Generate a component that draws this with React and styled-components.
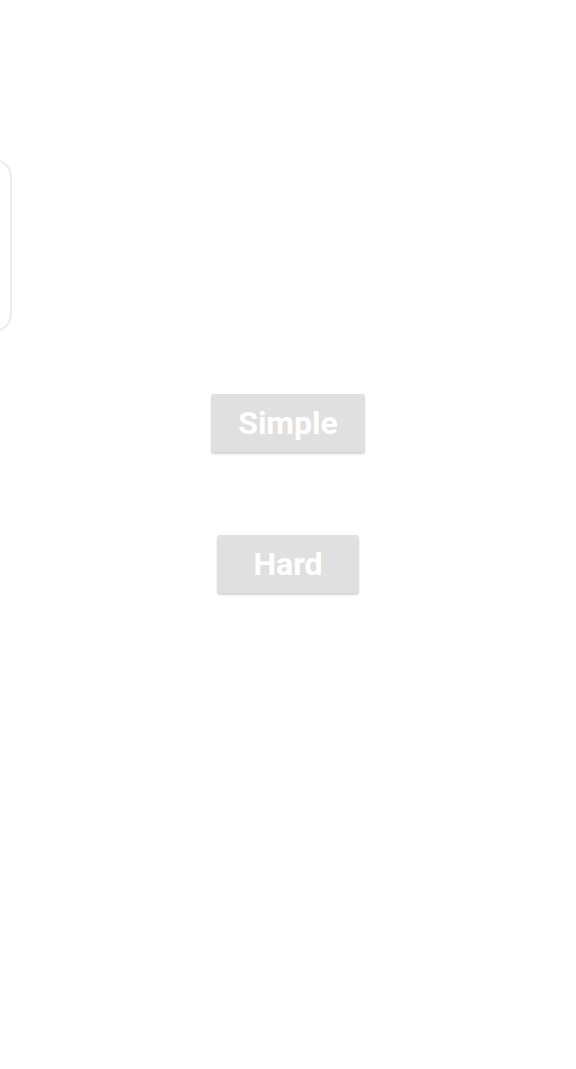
import React from 'react';
import styled, { createGlobalStyle } from 'styled-components';

const GlobalStyle = createGlobalStyle`
  html, body {
    margin: 0;
    padding: 0;
    background: #fff;
    font-family: Roboto, "Liberation Sans", sans-serif;
  }
`;

const Screen = styled.div`
  width: 576px;
  height: 1069px;
  overflow: hidden;
  background: #fff;
`;

const Carousel = styled.div`
  padding-top: 159px;
  display: flex;
`;

const PeekCard = styled.div`
  width: 200px;
  height: 173px;
  margin-left: -188px;
  border: 2px solid #ececec;
  border-radius: 18px;
  box-sizing: border-box;
  background: #fff;
`;

const Choices = styled.div`
  display: flex;
  flex-direction: column;
  align-items: center;
  gap: 83px;
  margin-top: 62px;
`;

const ChoiceButton = styled.button`
  border: none;
  border-radius: 3px;
  background: #e0e0e0;
  color: #fff;
  font-family: Roboto, "Liberation Sans", sans-serif;
  font-weight: 700;
  font-size: 32px;
  line-height: 38px;
  height: 58px;
  padding: 0 ${p => p.$pad}px;
  box-shadow: 0 2px 2px rgba(0, 0, 0, 0.18);
  cursor: pointer;
`;

export default function App() {
  return (
    <Screen>
      <GlobalStyle />
      <Carousel>
        <PeekCard />
      </Carousel>
      <Choices>
        <ChoiceButton $pad={27}>Simple</ChoiceButton>
        <ChoiceButton $pad={36}>Hard</ChoiceButton>
      </Choices>
    </Screen>
  );
}
